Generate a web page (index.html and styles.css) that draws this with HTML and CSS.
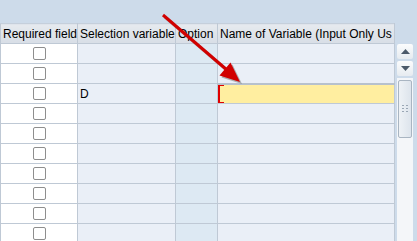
FILE: index.html
```html
<!DOCTYPE html>
<html lang="en">
<head>
    <meta charset="UTF-8">
    <title>Variable assignment</title>
    <link rel="stylesheet" href="styles.css">
</head>
<body>
<div class="screen">
    <div class="top-band"></div>
    <div class="grid-area">
        <table class="grid">
            <thead>
                <tr>
                    <th class="col-req">Required field</th>
                    <th class="col-sel">Selection variable</th>
                    <th class="col-opt">Option</th>
                    <th class="col-name">Name of Variable (Input Only Us</th>
                </tr>
            </thead>
            <tbody>
                <tr><td class="col-req"><span class="check"></span></td><td></td><td class="opt"></td><td></td></tr>
                <tr><td class="col-req"><span class="check"></span></td><td></td><td class="opt"></td><td></td></tr>
                <tr class="current"><td class="col-req"><span class="check"></span></td><td>D</td><td class="opt"></td><td class="input"><span class="cursor"></span></td></tr>
                <tr><td class="col-req"><span class="check"></span></td><td></td><td class="opt"></td><td></td></tr>
                <tr><td class="col-req"><span class="check"></span></td><td></td><td class="opt"></td><td></td></tr>
                <tr><td class="col-req"><span class="check"></span></td><td></td><td class="opt"></td><td></td></tr>
                <tr><td class="col-req"><span class="check"></span></td><td></td><td class="opt"></td><td></td></tr>
                <tr><td class="col-req"><span class="check"></span></td><td></td><td class="opt"></td><td></td></tr>
                <tr><td class="col-req"><span class="check"></span></td><td></td><td class="opt"></td><td></td></tr>
                <tr><td class="col-req"><span class="check"></span></td><td></td><td class="opt"></td><td></td></tr>
                <tr><td class="col-req"><span class="check"></span></td><td></td><td class="opt"></td><td></td></tr>
            </tbody>
        </table>
        <div class="vscroll">
            <div class="scroll-btn">
                <svg width="9" height="5" viewBox="0 0 9 5"><path d="M0 5 L4.5 0 L9 5 Z" fill="#4b5a6a"/></svg>
            </div>
            <div class="scroll-btn">
                <svg width="9" height="5" viewBox="0 0 9 5"><path d="M0 0 L4.5 5 L9 0 Z" fill="#4b5a6a"/></svg>
            </div>
            <div class="scroll-track">
                <div class="thumb">
                    <svg width="7" height="9" viewBox="0 0 7 9">
                        <g fill="#9aa7b5">
                            <rect x="0" y="0" width="2" height="1"/><rect x="4" y="0" width="2" height="1"/>
                            <rect x="0" y="3" width="2" height="1"/><rect x="4" y="3" width="2" height="1"/>
                            <rect x="0" y="6" width="2" height="1"/><rect x="4" y="6" width="2" height="1"/>
                        </g>
                    </svg>
                </div>
            </div>
        </div>
    </div>

    <!-- annotation arrow drawn over the grid -->
    <svg class="arrow" width="417" height="241" viewBox="0 0 417 241">
        <g fill="#7a7a7a" opacity="0.55" transform="translate(2,2)">
            <path d="M163 15 L227 70" stroke="#7a7a7a" stroke-width="3"/>
            <polygon points="240,82 219.5,75.5 230.5,62.5"/>
        </g>
        <path d="M163 15 L227 70" stroke="#d10000" stroke-width="3"/>
        <polygon points="240,82 219.5,75.5 230.5,62.5" fill="#d10000"/>
    </svg>
</div>
</body>
</html>
```

FILE: styles.css
```css
body {
    margin: 0;
    background-color: #cddbea;
    font-family: 'Liberation Sans', Arial, sans-serif;
    font-size: 12px;
    color: #000;
}

.screen {
    position: relative;
    width: 417px;
    height: 241px;
    overflow: hidden;
    background-color: #cddbea;
}

.top-band {
    height: 23px;
    background-color: #cddbea;
}

.grid-area {
    display: flex;
    align-items: flex-start;
}

.grid {
    border-collapse: collapse;
    table-layout: fixed;
    width: 395px;
    background-color: #eaeff7;
}

.grid th,
.grid td {
    border: 1px solid #bfc9d5;
    padding: 0 2px;
    white-space: nowrap;
    overflow: hidden;
    text-align: left;
}

.grid th {
    height: 19px;
    font-weight: normal;
    background: linear-gradient(#e6eaef, #d8dee6);
    border-top-color: #c5cfdb;
}

.grid td {
    height: 18px;
}

.col-req {
    width: 72px;
}

.col-sel {
    width: 93px;
}

.col-opt {
    width: 37px;
}

.grid td.col-req {
    background-color: #fff;
    text-align: center;
    vertical-align: top;
}

.grid td.opt {
    background-color: #dde9f3;
}

.check {
    display: inline-block;
    width: 11px;
    height: 11px;
    margin-top: 3px;
    border: 1px solid #8e8e8e;
    border-radius: 2px;
    background-color: #fff;
}

.grid td.input {
    position: relative;
    background-color: #ffeea0;
    border-top: 2px solid #b7c1cd;
}

.cursor {
    position: absolute;
    left: 0;
    top: -1px;
    bottom: -1px;
    width: 4px;
    border-top: 2px solid #e00000;
    border-bottom: 2px solid #e00000;
    border-left: 2px solid #e00000;
}

.vscroll {
    width: 16px;
    margin-top: 21px;
    margin-left: 2px;
    display: flex;
    flex-direction: column;
    gap: 2px;
}

.scroll-btn {
    height: 15px;
    display: flex;
    align-items: center;
    justify-content: center;
    background: linear-gradient(#fbfcfd, #e6ebf0);
    border-radius: 2px;
}

.scroll-track {
    height: 170px;
    padding-top: 2px;
    background-color: #f4f6f9;
}

.thumb {
    height: 56px;
    margin: 0 1px;
    border: 1px solid #a9b5c2;
    border-radius: 2px;
    background: linear-gradient(90deg, #eef2f6, #dde4ec);
    display: flex;
    align-items: center;
    justify-content: center;
}

.arrow {
    position: absolute;
    left: 0;
    top: 0;
}
```
